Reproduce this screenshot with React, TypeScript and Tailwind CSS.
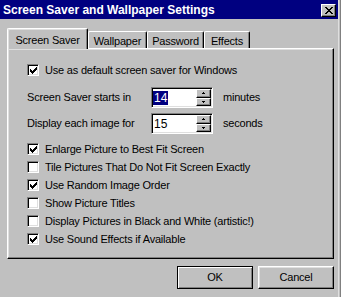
import React from 'react';

const OPTIONS = [
  { label: 'Enlarge Picture to Best Fit Screen', checked: true },
  { label: 'Tile Pictures That Do Not Fit Screen Exactly', checked: false },
  { label: 'Use Random Image Order', checked: true },
  { label: 'Show Picture Titles', checked: false },
  { label: 'Display Pictures in Black and White (artistic!)', checked: false },
  { label: 'Use Sound Effects if Available', checked: true },
];

const TABS = [
  { label: 'Screen Saver', width: 'w-[81px]' },
  { label: 'Wallpaper', width: 'w-[59px]' },
  { label: 'Password', width: 'w-[57px]' },
  { label: 'Effects', width: 'w-[46px]' },
];

function CheckMark() {
  return (
    <svg width="7" height="7" viewBox="0 0 7 7" shapeRendering="crispEdges" fill="#000">
      <rect x="6" y="0" width="1" height="1" />
      <rect x="5" y="1" width="2" height="1" />
      <rect x="0" y="2" width="1" height="1" />
      <rect x="4" y="2" width="3" height="1" />
      <rect x="0" y="3" width="2" height="1" />
      <rect x="3" y="3" width="3" height="1" />
      <rect x="0" y="4" width="5" height="1" />
      <rect x="1" y="5" width="3" height="1" />
      <rect x="2" y="6" width="1" height="1" />
    </svg>
  );
}

function CheckRow({ label, checked }: { label: string; checked: boolean }) {
  return (
    <div className="flex items-center gap-[6px] h-[12px]">
      <div className="w-[12px] h-[12px] shrink-0 bg-white border border-t-[#808080] border-l-[#808080] border-b-white border-r-white shadow-[inset_1px_1px_0_#000,inset_-1px_-1px_0_#dfdfdf] flex items-center justify-center">
        {checked && <CheckMark />}
      </div>
      <span className="leading-[12px] whitespace-nowrap">{label}</span>
    </div>
  );
}

function SpinButton({ up }: { up?: boolean }) {
  return (
    <div className="flex-1 bg-[#c0c0c0] border border-t-white border-l-white border-b-black border-r-black shadow-[inset_-1px_-1px_0_#808080] flex items-center justify-center">
      <svg width="3" height="2" viewBox="0 0 3 2" shapeRendering="crispEdges" fill="#000">
        {up ? (
          <>
            <rect x="1" y="0" width="1" height="1" />
            <rect x="0" y="1" width="3" height="1" />
          </>
        ) : (
          <>
            <rect x="0" y="0" width="3" height="1" />
            <rect x="1" y="1" width="1" height="1" />
          </>
        )}
      </svg>
    </div>
  );
}

function SpinRow({ label, value, unit, selected }: { label: string; value: string; unit: string; selected?: boolean }) {
  return (
    <div className="flex items-center h-[21px]">
      <span className="w-[124px] whitespace-nowrap">{label}</span>
      <div className="w-[62px] h-[21px] flex bg-white border border-t-[#808080] border-l-[#808080] border-b-white border-r-white shadow-[inset_1px_1px_0_#000,inset_-1px_-1px_0_#dfdfdf] p-[1px]">
        <div className="flex-1 flex items-center text-[12px] tracking-normal">
          <span className={selected ? 'bg-[#000080] text-white px-[1px] leading-[14px]' : 'px-[1px] leading-[14px]'}>{value}</span>
        </div>
        <div className="w-[15px] flex flex-col">
          <SpinButton up />
          <SpinButton />
        </div>
      </div>
      <span className="ml-[10px]">{unit}</span>
    </div>
  );
}

export default function App() {
  return (
    <div className="w-[341px] h-[297px] bg-[#c0c0c0] flex overflow-hidden font-['Liberation_Sans',Arial,sans-serif] text-[11px] tracking-[-0.2px] text-black select-none">
      <div className="w-[338px] flex flex-col">
        {/* Title bar */}
        <div className="h-[19px] bg-[#000080] flex items-start justify-between pl-[3px] pr-[2px]">
          <span className="text-white font-bold text-[12px] tracking-normal leading-[17px] pt-[2px] whitespace-nowrap">
            Screen Saver and Wallpaper Settings
          </span>
          <div className="mt-[4px] w-[15px] h-[13px] bg-[#c0c0c0] border border-t-white border-l-white border-b-black border-r-black shadow-[inset_-1px_-1px_0_#808080] flex items-center justify-center">
            <svg width="8" height="7" viewBox="0 0 8 7" shapeRendering="crispEdges" fill="#000">
              <rect x="0" y="0" width="2" height="1" />
              <rect x="6" y="0" width="2" height="1" />
              <rect x="1" y="1" width="2" height="1" />
              <rect x="5" y="1" width="2" height="1" />
              <rect x="2" y="2" width="4" height="1" />
              <rect x="3" y="3" width="2" height="1" />
              <rect x="2" y="4" width="4" height="1" />
              <rect x="1" y="5" width="2" height="1" />
              <rect x="5" y="5" width="2" height="1" />
              <rect x="0" y="6" width="2" height="1" />
              <rect x="6" y="6" width="2" height="1" />
            </svg>
          </div>
        </div>

        <div className="pl-[7px] pt-[9px]">
          {/* Tabs */}
          <div className="flex items-end h-[20px]">
            {TABS.map((tab, i) =>
              i === 0 ? (
                <div
                  key={tab.label}
                  className={`${tab.width} h-[21px] -mb-[1px] relative z-10 bg-[#c0c0c0] border-l border-t border-r border-l-white border-t-white border-r-black rounded-t-[2px] shadow-[inset_-1px_0_0_#808080,inset_1px_1px_0_#dfdfdf] text-center pt-[6px] leading-[11px] whitespace-nowrap`}
                >
                  {tab.label}
                </div>
              ) : (
                <div
                  key={tab.label}
                  className={`${tab.width} h-[17px] bg-[#c0c0c0] border-l border-t border-r border-l-white border-t-white border-r-black rounded-t-[2px] shadow-[inset_-1px_0_0_#808080] text-center pt-[4px] leading-[11px] whitespace-nowrap`}
                >
                  {tab.label}
                </div>
              )
            )}
          </div>

          {/* Panel */}
          <div className="w-[327px] h-[211px] border border-t-white border-l-white border-r-black border-b-black shadow-[inset_-1px_-1px_0_#808080,inset_1px_1px_0_#dfdfdf] pt-[15px] pl-[19px]">
            <CheckRow label="Use as default screen saver for Windows" checked />
            <div className="mt-[11px] flex flex-col gap-[5px]">
              <SpinRow label="Screen Saver starts in" value="14" unit="minutes" selected />
              <SpinRow label="Display each image for" value="15" unit="seconds" />
            </div>
            <div className="mt-[9px] flex flex-col gap-[6px]">
              {OPTIONS.map(opt => (
                <CheckRow key={opt.label} label={opt.label} checked={opt.checked} />
              ))}
            </div>
          </div>

          {/* Buttons */}
          <div className="mt-[7px] w-[327px] flex justify-end gap-[5px]">
            <button className="w-[76px] h-[23px] bg-[#c0c0c0] border border-black shadow-[inset_1px_1px_0_#fff,inset_-1px_-1px_0_#808080] leading-[11px]">
              OK
            </button>
            <button className="w-[76px] h-[23px] bg-[#c0c0c0] border border-t-white border-l-white border-b-black border-r-black shadow-[inset_-1px_-1px_0_#808080,inset_1px_1px_0_#dfdfdf] leading-[11px]">
              Cancel
            </button>
          </div>
        </div>
      </div>

      {/* Window right edge */}
      <div className="w-[1px] bg-[#dfdfdf]" />
      <div className="w-[1px] bg-[#c0c0c0]" />
      <div className="w-[1px] bg-[#808080]" />
    </div>
  );
}
